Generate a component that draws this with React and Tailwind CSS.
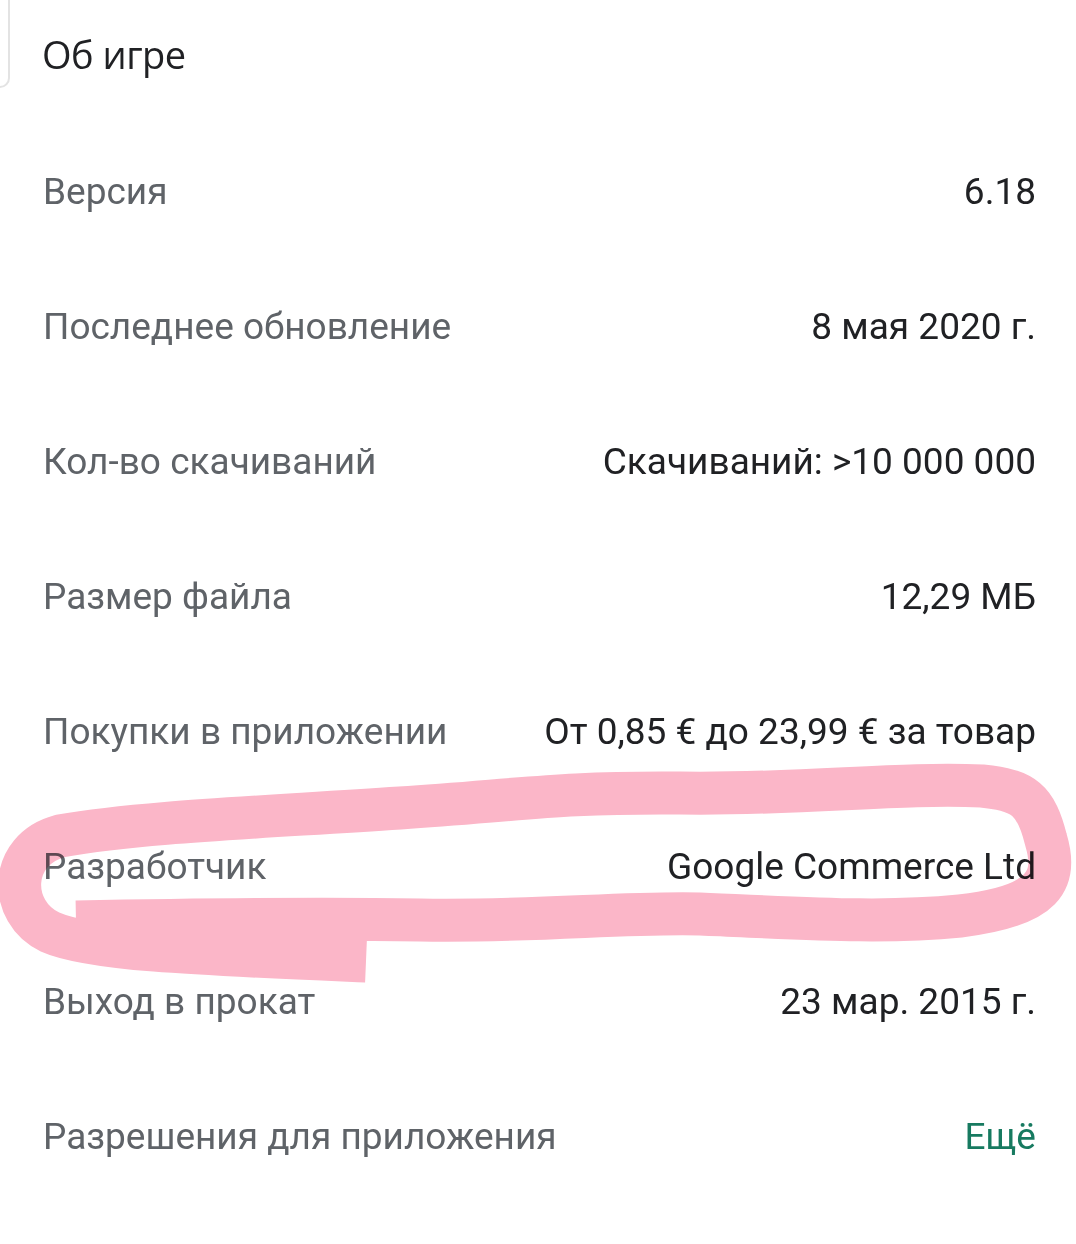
import React from 'react';

const rows = [
  ['Версия', '6.18'],
  ['Последнее обновление', '8 мая 2020 г.'],
  ['Кол-во скачиваний', 'Скачиваний: >10 000 000'],
  ['Размер файла', '12,29 МБ'],
  ['Покупки в приложении', 'От 0,85 € до 23,99 € за товар'],
  ['Разработчик', 'Google Commerce Ltd'],
  ['Выход в прокат', '23 мар. 2015 г.'],
];

const App = () => {
  return (
    <div className="relative w-[1076px] h-[1244px] bg-white overflow-hidden font-['Roboto',sans-serif]">
      <div className="absolute left-0 top-0 w-[10px] h-[88px] border-r-2 border-b-2 border-[#e3e3e3] rounded-br-[14px]" />

      <div className="h-[124px] pl-[42px] pt-[28px]">
        <h1 className="text-[38px] leading-[52px] text-[#202124] font-['Open_Sans',sans-serif] tracking-[-0.5px]">Об игре</h1>
      </div>

      <div className="pl-[43px] pr-[40px]">
        {rows.map(([label, value]) => (
          <div key={label} className="h-[135px] flex items-center justify-between text-[37px]">
            <span className="text-[#5f6368]">{label}</span>
            <span className="text-[#202124]">{value}</span>
          </div>
        ))}
        <div className="h-[135px] flex items-center justify-between text-[37px]">
          <span className="text-[#5f6368]">Разрешения для приложения</span>
          <span className="text-[#177a60]">Ещё</span>
        </div>
      </div>

      <svg
        className="absolute inset-0 pointer-events-none mix-blend-multiply"
        width="1076"
        height="1244"
        viewBox="0 0 1076 1244"
      >
        <path
          d="M76 922 C 180 920, 300 918, 420 920 C 540 922, 620 912, 700 914 C 800 918, 880 924, 960 916 C 1045 906, 1058 880, 1046 840 C 1036 800, 1024 790, 982 786 C 900 782, 800 795, 680 793 C 560 792, 520 800, 400 808 C 250 818, 140 822, 60 836 C 8 850, 8 912, 50 932 C 90 950, 200 954, 366 961"
          fill="none"
          stroke="#fbb6c8"
          strokeWidth="43"
          strokeLinejoin="round"
        />
      </svg>
    </div>
  );
};

export default App;
